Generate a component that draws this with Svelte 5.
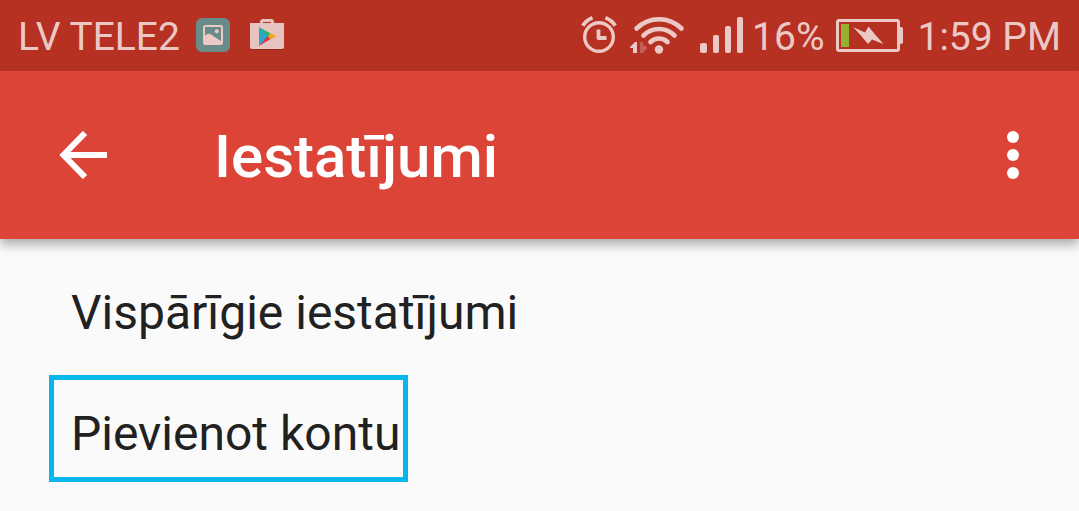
<script>
  let carrier = 'LV TELE2';
  let battery = 16;
  let time = '1:59 PM';

  let items = [
    { label: 'Vispārīgie iestatījumi', highlighted: false },
    { label: 'Pievienot kontu', highlighted: true }
  ];
</script>

<div class="status-bar">
  <div class="status-group notifications">
    <span>{carrier}</span>
    <svg class="picture-icon" width="34" height="34" viewBox="0 0 34 34" aria-hidden="true">
      <rect width="34" height="34" rx="6" fill="#698b89" />
      <rect x="8" y="8" width="18" height="18" rx="1.5" fill="none" stroke="#ebcac6" stroke-width="2" />
      <circle cx="20.8" cy="13.2" r="2" fill="#ebcac6" />
      <path d="M8 18.500Q10.500 15.500 13 15.800Q15 16 17.500 18.300L25 23V26H8Z" fill="#ebcac6" />
    </svg>
    <svg class="store-icon" width="34" height="34" viewBox="0 0 34 34" aria-hidden="true">
      <path d="M11.500 6V4Q11.500 2.500 13 2.500H21Q22.500 2.500 22.500 4V6" fill="none" stroke="#e8c4c0" stroke-width="3" />
      <path d="M0 5H34V30Q34 32 32 32H2Q0 32 0 30Z" fill="#97261b" />
      <path d="M0 5H34V29Q34 31 32 31H2Q0 31 0 29Z" fill="#e8c4c0" />
      <path d="M9 9V28L19 18.500Z" fill="#30a4c6" />
      <path d="M9 9L20.500 15.500L18 19Z" fill="#1fb973" />
      <path d="M9 28L20.500 21L18 18Z" fill="#e62f49" />
      <path d="M20.500 15L26 18.300L20.500 21.500L18 18.300Z" fill="#f0a51b" />
    </svg>
  </div>

  <div class="status-group system">
    <svg width="37" height="38" viewBox="0 0 37 38" fill="none" stroke="currentColor" aria-hidden="true">
      <circle cx="18" cy="21" r="14.300" stroke-width="3.400" />
      <path d="M17.500 13.500V22H25.500" stroke-width="3.800" stroke-linejoin="round" />
      <path d="M1.800 9.800Q5 4.500 11.500 1.800" stroke-width="3.800" />
      <path d="M24.500 1.800Q31 4.500 34.200 9.800" stroke-width="3.800" />
    </svg>
    <svg class="wifi-icon" width="55" height="38" viewBox="0 0 55 38" fill="none" stroke="currentColor" aria-hidden="true">
      <g stroke-width="4.600" stroke-linecap="round">
        <path d="M6.500 12.500Q16 3.300 29 3.300T51.500 12.500" />
        <path d="M13.500 19.500Q20 13 29 13T44.500 19.500" />
        <path d="M20.500 26Q24 22.500 29 22.500T37.500 26" />
      </g>
      <circle cx="29" cy="33.500" r="4.200" fill="currentColor" stroke="none" />
      <path d="M5 26H7V37H3V32H0V31Z" fill="currentColor" stroke="none" />
      <path d="M10 26H13V29L17 31V32L13 37H10Z" fill="currentColor" opacity="0.3" stroke="none" />
    </svg>
    <svg class="signal-icon" width="44" height="38" viewBox="0 0 44 38" fill="currentColor" aria-hidden="true">
      <rect x="0" y="27" width="7" height="10" rx="2" />
      <rect x="13" y="19" width="6" height="18" rx="2" />
      <rect x="25" y="10" width="6" height="27" rx="2" />
      <rect x="37" y="1" width="6" height="36" rx="2" />
    </svg>
    <span class="percent">{battery}%</span>
    <svg class="battery-icon" width="67" height="33" viewBox="0 0 67 33" aria-hidden="true">
      <rect x="1.500" y="1.500" width="61" height="30" rx="1.500" fill="none" stroke="currentColor" stroke-width="3" />
      <path d="M63 8H65Q67 8 67 10V23Q67 25 65 25H63Z" fill="currentColor" />
      <rect x="5" y="5" width="8" height="23" fill="#96b12d" />
      <path d="M17 8L29 13.500L32.500 7.500L39.500 16L47.500 25L36 20.500L32 25L24 15.500Z" fill="currentColor" />
    </svg>
    <span>{time}</span>
  </div>
</div>

<header class="app-bar">
  <button class="icon-button" type="button" aria-label="Atpakaļ">
    <svg width="48" height="48" viewBox="0 0 48 48" aria-hidden="true">
      <path d="M26 2L4.500 24L26 46M5 24H48" fill="none" stroke="#fff" stroke-width="6" />
    </svg>
  </button>
  <h1>Iestatījumi</h1>
  <button class="icon-button" type="button" aria-label="Citas opcijas">
    <svg width="12" height="48" viewBox="0 0 12 48" fill="#fff" aria-hidden="true">
      <circle cx="6" cy="6" r="6" />
      <circle cx="6" cy="24" r="6" />
      <circle cx="6" cy="42" r="6" />
    </svg>
  </button>
</header>

<main class="settings">
  {#each items as item}
    <button class="item" class:highlighted={item.highlighted} type="button">{item.label}</button>
  {/each}
</main>

<style>
  :global(body) {
    background: #fafafa;
    font-family: Roboto, 'Liberation Sans', sans-serif;
  }

  .status-bar {
    display: flex;
    align-items: center;
    justify-content: space-between;
    height: 71px;
    padding: 2px 18px 0;
    box-sizing: border-box;
    background: #b73122;
    color: #ecc9c6;
    font-size: 39px;
    line-height: 46px;
    white-space: nowrap;
  }

  .status-group {
    display: flex;
    align-items: center;
  }

  .status-group svg {
    margin-bottom: 3px;
  }

  .notifications {
    gap: 16px;
  }

  .store-icon {
    margin-left: 4px;
  }

  .wifi-icon {
    margin-left: 12px;
  }

  .signal-icon {
    margin-left: 15px;
  }

  .percent {
    margin-left: 8px;
  }

  .battery-icon {
    margin-left: 12px;
    margin-right: 14px;
  }

  .app-bar {
    display: flex;
    align-items: center;
    height: 168px;
    padding: 0 60px 0 59px;
    box-sizing: border-box;
    background: #dc4437;
    box-shadow: 0 6px 10px rgba(0, 0, 0, 0.3);
  }

  h1 {
    flex: 1;
    margin: 0 0 0 107px;
    padding-top: 4px;
    color: #fff;
    font-size: 60px;
    font-weight: 500;
    line-height: 70px;
  }

  button {
    border: 0;
    background: none;
    font: inherit;
    cursor: pointer;
  }

  .icon-button {
    display: flex;
    padding: 0;
  }

  .settings {
    display: flex;
    flex-direction: column;
    align-items: flex-start;
    gap: 14px;
    padding: 15px 49px 29px;
  }

  .item {
    padding: 26px 3px 15px 17px;
    border: 5px solid transparent;
    color: #212121;
    font-size: 48px;
    line-height: 56px;
    text-align: left;
  }

  .highlighted {
    border-color: #07b7eb;
  }
</style>
